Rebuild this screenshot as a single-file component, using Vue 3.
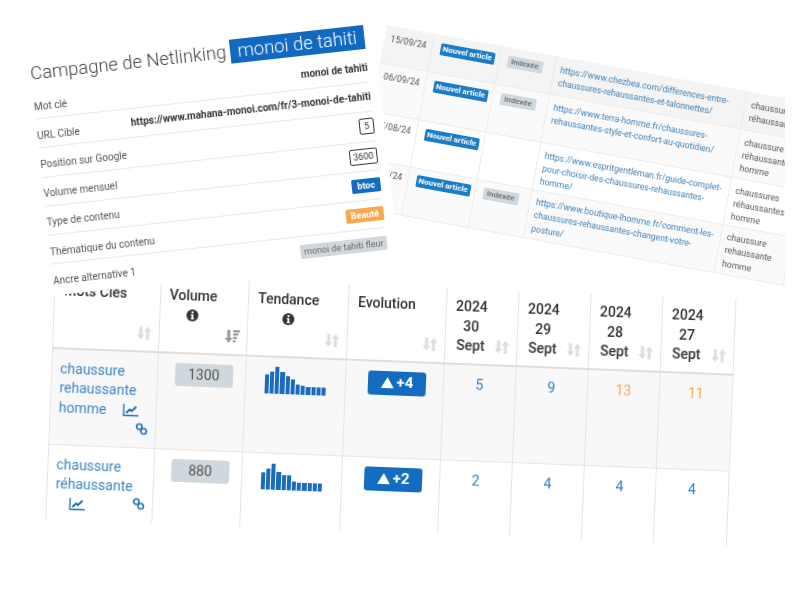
<script setup>
// Three tilted table screenshots laid over each other on a white canvas.
const campaign = [
  { label: 'Mot clé', value: 'monoi de tahiti', kind: 'strong' },
  { label: 'URL Cible', value: 'https://www.mahana-monoi.com/fr/3-monoi-de-tahiti', kind: 'strong' },
  { label: 'Position sur Google', value: '5', kind: 'outline' },
  { label: 'Volume mensuel', value: '3600', kind: 'outline' },
  { label: 'Type de contenu', value: 'btoc', kind: 'blue' },
  { label: 'Thématique du contenu', value: 'Beauté', kind: 'orange' },
  { label: 'Ancre alternative 1', value: 'monoi de tahiti fleur', kind: 'grey' },
]

const links = [
  {
    date: '15/09/24', indexed: true, height: 39, tint: 'tint-a',
    url: 'https://www.chezbea.com/differences-entre-chaussures-rehaussantes-et-talonnettes/',
    anchor: 'chaussure réhaussante',
  },
  {
    date: '06/09/24', indexed: true, height: 49, tint: 'tint-b',
    url: 'https://www.terra-homme.fr/chaussures-rehaussantes-style-et-confort-au-quotidien/',
    anchor: 'chaussure réhaussante homme',
  },
  {
    date: '07/08/24', indexed: false, height: 47.5, tint: '',
    url: 'https://www.espritgentleman.fr/guide-complet-pour-choisir-des-chaussures-rehaussantes-homme/',
    anchor: 'chaussures réhaussantes homme',
  },
  {
    date: '01/08/24', indexed: true, height: 49, tint: 'tint-b',
    url: 'https://www.boutique-lhomme.fr/comment-les-chaussures-rehaussantes-changent-votre-posture/',
    anchor: 'chaussure rehaussante homme',
  },
]

const days = ['30', '29', '28', '27']

const keywords = [
  {
    name: 'chaussure rehaussante homme', volume: 1300, delta: '+4', tint: true,
    bars: [19, 22, 27, 22, 18, 15, 10, 9, 8, 8, 8, 8],
    counts: [{ n: 5 }, { n: 9 }, { n: 13, hot: true }, { n: 11, hot: true }],
  },
  {
    name: 'chaussure réhaussante', volume: 880, delta: '+2', tint: false,
    bars: [17, 21, 26, 18, 15, 15, 9, 8, 8, 8, 8, 8],
    counts: [{ n: 2 }, { n: 4 }, { n: 4 }, { n: 4 }],
  },
]

const sortPath = 'M2.7 1h3.2v8.6h2.5L4.3 15 .2 9.6h2.5zM10.1 15h3.2V6.4h2.5L11.7 1 7.6 6.4h2.5z'
const sortDownPath = 'M2.7 1h3.2v8.6h2.5L4.3 15 .2 9.6h2.5zM9 1h7v2.4H9zM9 4.6h5.6V7H9zM9 8.2h4v2.4H9zM9 11.8h2.6v2.4H9z'
</script>

<template>
  <div class="canvas">
    <div class="clip">
      <section class="sheet-links">
        <div v-for="row in links" :key="row.date" class="link-row" :class="row.tint" :style="{ height: row.height + 'px' }">
          <div class="cell date">{{ row.date }}</div>
          <div class="cell"><span class="tag new">Nouvel article</span></div>
          <div class="cell"><span v-if="row.indexed" class="tag indexed">Indexée</span></div>
          <div class="cell url">{{ row.url }}</div>
          <div class="cell anchor">{{ row.anchor }}</div>
        </div>
      </section>
    </div>

    <section class="sheet-keywords">
      <div class="kw-row kw-head">
        <div class="kw-cell">
          <b class="head-text">Mots Clés</b>
          <svg class="sort" viewBox="0 0 16 16"><path :d="sortPath" /></svg>
        </div>
        <div class="kw-cell">
          <div class="head-stack">
            <b>Volume</b>
            <svg class="info" viewBox="0 0 12 12"><circle cx="6" cy="6" r="6" /><rect x="5" y="2" width="2" height="2" fill="#fff" /><path d="M4.4 5h2.6v3.8h.7V10H4.4V8.8h.8V6.2h-.8z" fill="#fff" /></svg>
          </div>
          <svg class="sort active" viewBox="0 0 16 16"><path :d="sortDownPath" /></svg>
        </div>
        <div class="kw-cell">
          <div class="head-stack">
            <b>Tendance</b>
            <svg class="info" viewBox="0 0 12 12"><circle cx="6" cy="6" r="6" /><rect x="5" y="2" width="2" height="2" fill="#fff" /><path d="M4.4 5h2.6v3.8h.7V10H4.4V8.8h.8V6.2h-.8z" fill="#fff" /></svg>
          </div>
          <svg class="sort" viewBox="0 0 16 16"><path :d="sortPath" /></svg>
        </div>
        <div class="kw-cell">
          <b class="head-text">Evolution</b>
          <svg class="sort" viewBox="0 0 16 16"><path :d="sortPath" /></svg>
        </div>
        <div v-for="d in days" :key="d" class="kw-cell">
          <div class="head-stack">
            <b>2024</b>
            <b>{{ d }}</b>
            <b>Sept</b>
          </div>
          <svg class="sort" viewBox="0 0 16 16"><path :d="sortPath" /></svg>
        </div>
      </div>

      <div v-for="k in keywords" :key="k.name" class="kw-row" :class="k.tint ? 'kw-one tinted' : 'kw-two'">
        <div class="kw-cell name-cell">
          <span>{{ k.name }}</span>
          <svg class="chart" viewBox="0 0 16 14"><path d="M1 1v11.5h15" fill="none" stroke="currentColor" stroke-width="1.3" /><path d="M3.5 10 7 6.5 9 8l4.5-4.5" fill="none" stroke="currentColor" stroke-width="2" /></svg>
          <svg class="chain" viewBox="0 0 14 14"><circle cx="4.6" cy="4.6" r="3" /><circle cx="9.4" cy="9.4" r="3" /></svg>
        </div>
        <div class="kw-cell center"><span class="chip">{{ k.volume }}</span></div>
        <div class="kw-cell center no-shift">
          <div class="spark">
            <i v-for="(h, i) in k.bars" :key="i" :style="{ height: h + 'px' }"></i>
          </div>
        </div>
        <div class="kw-cell center">
          <span class="delta"><svg viewBox="0 0 14 12"><path d="M7 0l7 12H0z" /></svg>{{ k.delta }}</span>
        </div>
        <div v-for="(c, i) in k.counts" :key="i" class="kw-cell count" :class="{ hot: c.hot }">{{ c.n }}</div>
      </div>
    </section>

    <section class="sheet-campaign">
      <header class="title">
        <h1>Campagne de Netlinking</h1>
        <span class="title-tag">monoi de tahiti</span>
      </header>
      <div v-for="row in campaign" :key="row.label" class="camp-row">
        <span class="camp-label">{{ row.label }}</span>
        <span class="camp-value" :class="row.kind">{{ row.value }}</span>
      </div>
    </section>
  </div>
</template>

<style>
html, body { background: #fff; }
</style>

<style scoped>
.canvas {
  position: relative;
  width: 800px;
  height: 600px;
  overflow: hidden;
  background: #fff;
  font-family: Roboto, "Liberation Sans", sans-serif;
}
.clip {
  position: absolute;
  inset: 0 15px 0 0;
  overflow: hidden;
}

/* backlinks table, top right */
.sheet-links {
  position: absolute;
  left: 387px;
  top: 25px;
  width: 500px;
  transform: rotate(10.4deg);
  transform-origin: 0 0;
  font-size: 8.7px;
  line-height: 13.4px;
  color: #555;
  filter: blur(0.3px);
}
.link-row {
  display: grid;
  grid-template-columns: 48.7px 68px 56px 194px 70px;
  border-bottom: 1px solid #ececec;
  box-sizing: border-box;
}
.link-row:not(:first-child) .cell { padding-top: 5.5px; }
.tint-a { background: #f4f4f4; }
.tint-b { background: #fafafa; }
.cell {
  padding: 7px 6px 0;
  border-right: 1px solid #ececec;
  overflow: hidden;
}
.url { color: #3f7fb5; font-size: 8.6px; overflow-wrap: anywhere; }
.tag {
  display: inline-block;
  height: 12px;
  line-height: 12px;
  margin-left: 2px;
  border-radius: 1.5px;
  font-size: 8px;
  text-align: center;
  white-space: nowrap;
}
.new { width: 55px; background: #1b7cc7; color: #fff; font-weight: 700; }
.indexed { width: 36px; background: #d0d8dd; color: #666; font-weight: 500; }

/* keyword table, bottom */
.sheet-keywords {
  position: absolute;
  left: 55px;
  top: 273px;
  width: 682px;
  transform: rotate(2.25deg);
  transform-origin: 0 0;
  font-size: 14px;
  line-height: 19.5px;
  color: #333;
  background: #fff;
  filter: blur(0.3px);
}
.kw-row {
  display: grid;
  grid-template-columns: 106.5px 88.5px 100px 98px 72px 72px 72px 73px;
  border-bottom: 1px solid #e6e6e6;
  box-sizing: border-box;
}
.kw-head { height: 75.5px; border-bottom: 2px solid #dedede; }
.kw-one { height: 96px; }
.kw-two { height: 74px; border-bottom: 0; }
.tinted { background: #f8f8f8; }
.kw-cell {
  position: relative;
  padding: 8px 8px 0 9px;
  border-right: 1px solid #e6e6e6;
  box-sizing: border-box;
}
.kw-cell:first-child { border-left: 1px solid #e6e6e6; }
.kw-head b { font-weight: 500; display: block; }
.head-stack {
  display: inline-flex;
  flex-direction: column;
  align-items: center;
}
.info { width: 12px; height: 12px; margin-top: 3px; fill: #333; }
.sort {
  position: absolute;
  right: 7px;
  bottom: 10px;
  width: 15px;
  height: 15px;
  fill: #ddd;
}
.sort.active { fill: #999; }

.name-cell { padding: 10px 6px 0 8px; color: #3d85c6; }
.chart {
  width: 16px;
  height: 14px;
  margin-left: 14px;
  vertical-align: -2px;
  color: #1f6fb8;
}
.tinted .chart { margin-left: 16px; }
.chain {
  position: absolute;
  right: 7px;
  bottom: 12px;
  width: 13px;
  height: 13px;
  fill: none;
  stroke: #1f6fb8;
  stroke-width: 1.7;
}
.center {
  display: flex;
  justify-content: center;
  align-items: flex-start;
  padding: 9px 0 0 5px;
}
.no-shift { padding-left: 0; }
.chip {
  width: 58px;
  height: 23px;
  line-height: 23px;
  border-radius: 3px;
  background: #d0d8dd;
  color: #555;
  text-align: center;
}
.spark {
  display: flex;
  align-items: flex-end;
  gap: 1px;
  height: 27px;
}
.spark i { display: block; width: 4.2px; background: #1a6cc0; }
.delta {
  display: flex;
  align-items: center;
  justify-content: center;
  gap: 3px;
  width: 58px;
  height: 24px;
  border-radius: 3px;
  background: #146cc0;
  color: #fff;
  font-weight: 700;
  font-size: 15px;
}
.delta svg { width: 13px; height: 11px; fill: #fff; }
.count {
  padding: 10px 0 0;
  text-align: center;
  color: #3180cf;
}
.count.hot { color: #f7a85a; }

/* campaign card, top left, sits over the other two */
.sheet-campaign {
  position: absolute;
  left: 17.6px;
  top: 52.5px;
  width: 356px;
  height: 245px;
  padding: 9.5px 10px 0;
  box-sizing: border-box;
  transform: rotate(-6.3deg);
  transform-origin: 0 0;
  background: #fff;
  color: #555;
  overflow: hidden;
  filter: blur(0.3px);
}
.title {
  display: flex;
  align-items: center;
  justify-content: space-between;
  height: 24.5px;
  margin-bottom: 5px;
}
h1 {
  margin: 0;
  font-size: 18.4px;
  font-weight: 300;
  color: #444;
  white-space: nowrap;
}
.title-tag {
  width: 135px;
  height: 24.5px;
  line-height: 24.5px;
  background: #1269c2;
  color: #fff;
  font-size: 18.4px;
  font-weight: 300;
  text-align: center;
  white-space: nowrap;
}
.camp-row {
  display: flex;
  align-items: center;
  justify-content: space-between;
  height: 29.2px;
  box-sizing: border-box;
  border-bottom: 1px solid #e8e8e8;
  font-size: 10px;
}
.camp-row:last-child { border-bottom: 0; }
.camp-label { padding-top: 4px; }
.camp-value { white-space: nowrap; text-align: center; line-height: 14px; }
.strong { color: #333; font-weight: 700; }
.outline { min-width: 15px; padding: 0 3px; box-sizing: border-box; border: 1px solid #333; border-radius: 2px; color: #333; font-size: 9px; }
.blue { min-width: 29px; background: #146cc0; color: #fff; font-weight: 700; font-size: 9px; border-radius: 1.5px; }
.orange { min-width: 38px; background: #f7a84f; color: #fff; font-weight: 700; font-size: 9px; border-radius: 1.5px; }
.grey { min-width: 87px; background: #d0d8dd; color: #666; font-size: 9px; border-radius: 1.5px; }
</style>
